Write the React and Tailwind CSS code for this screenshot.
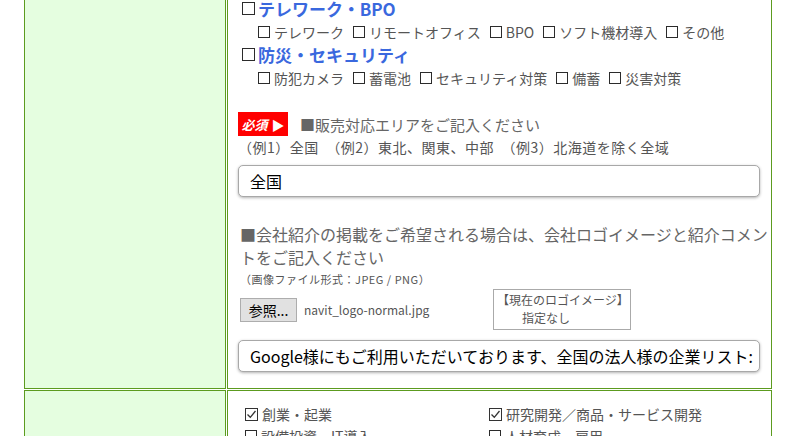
import React from 'react';

// Checkbox glyphs drawn as small CSS boxes
function TitleBox() {
  return <span className="inline-block h-[13px] w-[13px] shrink-0 border-[1.5px] border-[#2b2b2b] bg-white" />;
}

function SubBox() {
  return <span className="inline-block h-[12px] w-[12px] shrink-0 border-[1.5px] border-[#2b2b2b] bg-white" />;
}

function CheckedBox() {
  return (
    <span className="inline-flex h-[13px] w-[13px] shrink-0 items-center justify-center border border-[#333] bg-white">
      <svg width="11" height="11" viewBox="0 0 11 11">
        <polyline points="1.5,5.5 4.3,8.3 9.5,2" fill="none" stroke="#333" strokeWidth="1.3" />
      </svg>
    </span>
  );
}

function Category({ title, items }) {
  return (
    <>
      <div className="flex h-[23px] items-center pl-[4px]">
        <TitleBox />
        <span className="ml-[3px] text-[17px] font-bold text-[#3a68de]">{title}</span>
      </div>
      <div className="flex h-[23px] items-center pl-[20px] text-[14px] text-[#555]">
        {items.map((item) => (
          <span key={item} className="mr-[9px] flex items-center">
            <SubBox />
            <span className="ml-[4px]">{item}</span>
          </span>
        ))}
      </div>
    </>
  );
}

function TextInput({ value }) {
  return (
    <div className="flex h-[32px] w-[522px] items-center overflow-hidden whitespace-nowrap rounded-[5px] border border-[#a8a8a8] bg-white pl-[11px] text-[16px] text-black shadow-[0_1px_3px_rgba(0,0,0,0.3)]">
      {value}
    </div>
  );
}

function CheckItem({ label, checked }) {
  return (
    <div className="flex h-[22px] w-[244px] items-center text-[14px] text-[#555]">
      {checked ? <CheckedBox /> : <SubBox />}
      <span className="ml-[4px]">{label}</span>
    </div>
  );
}

export default function App() {
  return (
    <div className="h-[436px] overflow-hidden bg-white font-['Noto_Sans_CJK_JP',sans-serif] leading-none">
      <div className="ml-[24px] flex w-[748px] flex-col gap-[1px]">
        {/* Row 1: product categories, area, company intro */}
        <div className="flex gap-[1px]">
          <div className="w-[202px] border-x border-b border-[#5c9b1f] bg-[#e5fee0]" />
          <div className="w-[545px] border-x border-b border-[#5c9b1f] bg-white pb-[16px] pl-[10px]">
            <div className="-mt-[3px]">
              <Category
                title="テレワーク・BPO"
                items={['テレワーク', 'リモートオフィス', 'BPO', 'ソフト機材導入', 'その他']}
              />
              <Category
                title="防災・セキュリティ"
                items={['防犯カメラ', '蓄電池', 'セキュリティ対策', '備蓄', '災害対策']}
              />
            </div>

            {/* Sales area */}
            <div className="mt-[23px] flex h-[24px] items-center">
              <span className="flex h-[24px] w-[50px] items-center justify-center bg-[#ff0000] text-white">
                <span className="text-[13px] font-bold italic">必須</span>
                <span className="ml-[4px] text-[13px]">▶</span>
              </span>
              <span className="ml-[12px] text-[15px] text-[#666]">■販売対応エリアをご記入ください</span>
            </div>
            <div className="flex h-[22px] items-center text-[14px] tracking-[0.5px] text-[#555]">
              （例1）全国　（例2）東北、関東、中部　（例3）北海道を除く全域
            </div>
            <div className="mt-[7px]">
              <TextInput value="全国" />
            </div>

            {/* Company intro */}
            <p className="mt-[26px] w-[534px] pl-[2px] text-[16px] leading-[23px] text-[#666]">
              ■会社紹介の掲載をご希望される場合は、会社ロゴイメージと紹介コメントをご記入ください
            </p>
            <div className="flex h-[20px] items-center pl-[2px] text-[11px] tracking-[0.5px] text-[#555]">
              （画像ファイル形式：JPEG / PNG）
            </div>
            <div className="flex items-center">
              <button className="ml-[2px] h-[24px] w-[57px] border border-[#adadad] bg-[#e1e1e1] text-[14px] text-black">
                参照...
              </button>
              <span className="ml-[7px] w-[189px] text-[12px] text-[#555]">navit_logo-normal.jpg</span>
              <div className="flex h-[41px] w-[138px] flex-col border border-[#aaa] pl-[3px] pt-[4px] text-[#555]">
                <span className="text-[12px]">【現在のロゴイメージ】</span>
                <span className="ml-[25px] mt-[6px] text-[12px]">指定なし</span>
              </div>
            </div>
            <div className="mt-[10px]">
              <TextInput value="Google様にもご利用いただいております、全国の法人様の企業リスト:" />
            </div>
          </div>
        </div>

        {/* Row 2: purposes */}
        <div className="flex gap-[1px]">
          <div className="w-[202px] border border-[#5c9b1f] bg-[#e5fee0]" />
          <div className="w-[545px] border border-[#5c9b1f] bg-white pb-[12px] pl-[17px] pt-[12px]">
            <div className="flex flex-wrap">
              <CheckItem label="創業・起業" checked />
              <CheckItem label="研究開発／商品・サービス開発" checked />
              <CheckItem label="設備投資・IT導入" />
              <CheckItem label="人材育成・雇用" />
            </div>
          </div>
        </div>
      </div>
    </div>
  );
}
